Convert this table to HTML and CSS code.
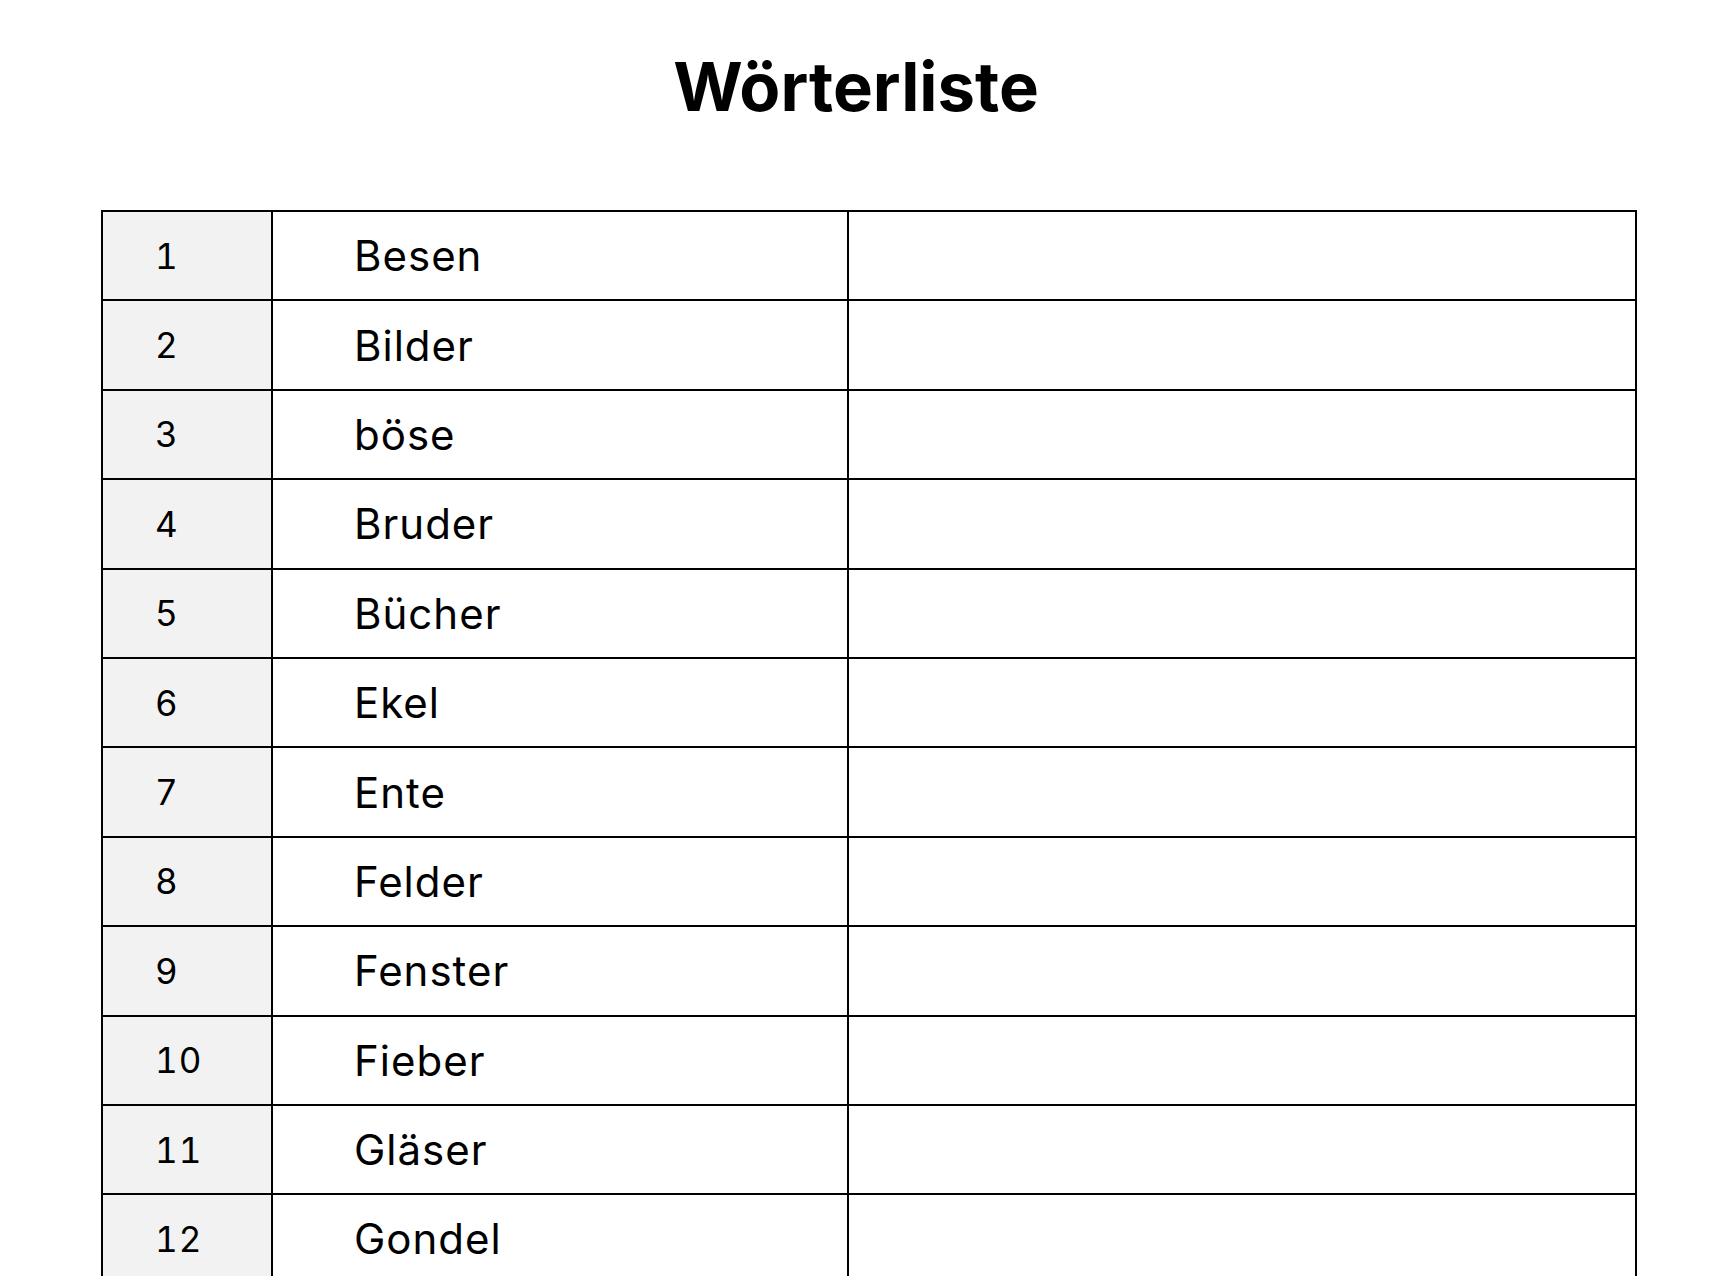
FILE: index.html
```html
<!DOCTYPE html>
<html lang="de">
<head>
<meta charset="utf-8">
<title>Wörterliste</title>
<link rel="stylesheet" href="styles.css">
</head>
<body>
<main class="page">
  <h1 class="title">Wörterliste</h1>
  <div class="list">
    <div class="num">1</div><div class="word">Besen</div><div class="blank"></div>
    <div class="num">2</div><div class="word">Bilder</div><div class="blank"></div>
    <div class="num">3</div><div class="word">böse</div><div class="blank"></div>
    <div class="num">4</div><div class="word">Bruder</div><div class="blank"></div>
    <div class="num">5</div><div class="word">Bücher</div><div class="blank"></div>
    <div class="num">6</div><div class="word">Ekel</div><div class="blank"></div>
    <div class="num">7</div><div class="word">Ente</div><div class="blank"></div>
    <div class="num">8</div><div class="word">Felder</div><div class="blank"></div>
    <div class="num">9</div><div class="word">Fenster</div><div class="blank"></div>
    <div class="num">10</div><div class="word">Fieber</div><div class="blank"></div>
    <div class="num">11</div><div class="word">Gläser</div><div class="blank"></div>
    <div class="num">12</div><div class="word">Gondel</div><div class="blank"></div>
  </div>
</main>
</body>
</html>
```

FILE: styles.css
```css
html, body {
  margin: 0;
  padding: 0;
  background: #ffffff;
}

.page {
  font-family: "Inter", "Liberation Sans", sans-serif;
  color: #000000;
  padding-top: 52px;
}

.title {
  margin: 0;
  padding-right: 19px;
  font-size: 67px;
  line-height: 70px;
  font-weight: 700;
  text-align: center;
  letter-spacing: 0;
}

.list {
  margin: 88px 0 0 101px;
  width: max-content;
  display: grid;
  grid-template-columns: 170px 576px 788px;
  grid-auto-rows: 89.4px;
  border-left: 2px solid #000;
  border-top: 2px solid #000;
}

.list > div {
  border-right: 2px solid #000;
  border-bottom: 2px solid #000;
  display: flex;
  align-items: center;
  box-sizing: border-box;
}

.num {
  background: #f2f2f2;
  padding-left: 52px;
  font-size: 35px;
  font-feature-settings: "tnum" 1;
  letter-spacing: 1px;
}

.word {
  padding-left: 81px;
  font-size: 42px;
  letter-spacing: 1px;
}
```
